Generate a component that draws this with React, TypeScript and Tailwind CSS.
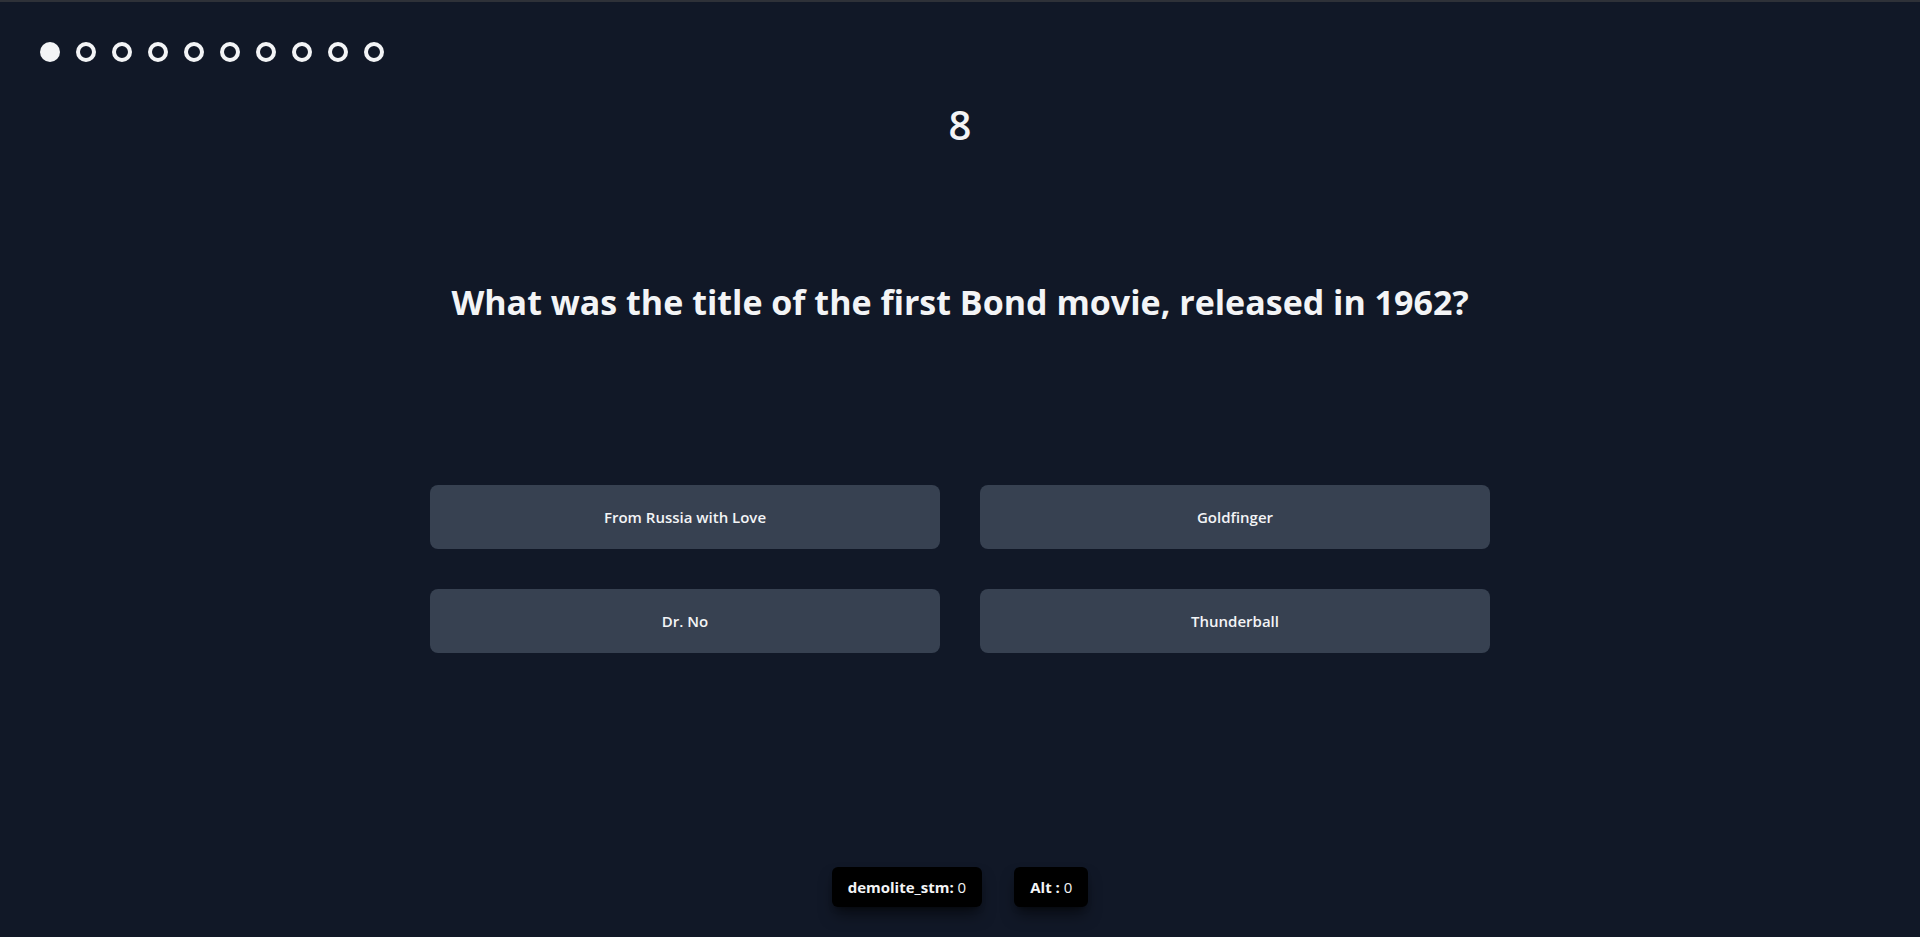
const answers = ["From Russia with Love", "Goldfinger", "Dr. No", "Thunderball"];

export default function App() {
    return (
        <div className="flex flex-col h-[937px] w-full bg-[#111827] border-t-2 border-[#2e3138] text-[#f3f4f6] font-['Open_Sans',sans-serif]">
            <div className="flex items-center gap-4 pl-10 pt-10">
                {Array.from({ length: 10 }).map((_, i) => (
                    <span
                        key={i}
                        className={i === 0 ? "w-5 h-5 rounded-full bg-[#f3f4f6]" : "w-5 h-5 rounded-full border-4 border-[#f3f4f6]"}
                    />
                ))}
            </div>

            <div className="mt-[39px] text-center text-[40px] leading-[48px] font-semibold">8</div>

            <h1 className="mt-[133px] text-center text-[34px] leading-10 font-bold">
                What was the title of the first Bond movie, released in 1962?
            </h1>

            <div className="mt-[163px] mx-auto grid grid-cols-2 gap-10 w-[1060px]">
                {answers.map((a) => (
                    <button key={a} className="h-16 rounded-lg bg-[#374151] text-[15px] font-semibold text-[#f3f4f6]">
                        {a}
                    </button>
                ))}
            </div>

            <div className="mt-auto pb-[30px] flex justify-center gap-8">
                <div className="h-10 px-4 flex items-center rounded-md bg-black shadow-lg shadow-black/50 text-[15px]">
                    <span className="font-bold">demolite_stm:</span>&nbsp;0
                </div>
                <div className="h-10 px-4 flex items-center rounded-md bg-black shadow-lg shadow-black/50 text-[15px]">
                    <span className="font-bold">Alt :</span>&nbsp;0
                </div>
            </div>
        </div>
    );
}
